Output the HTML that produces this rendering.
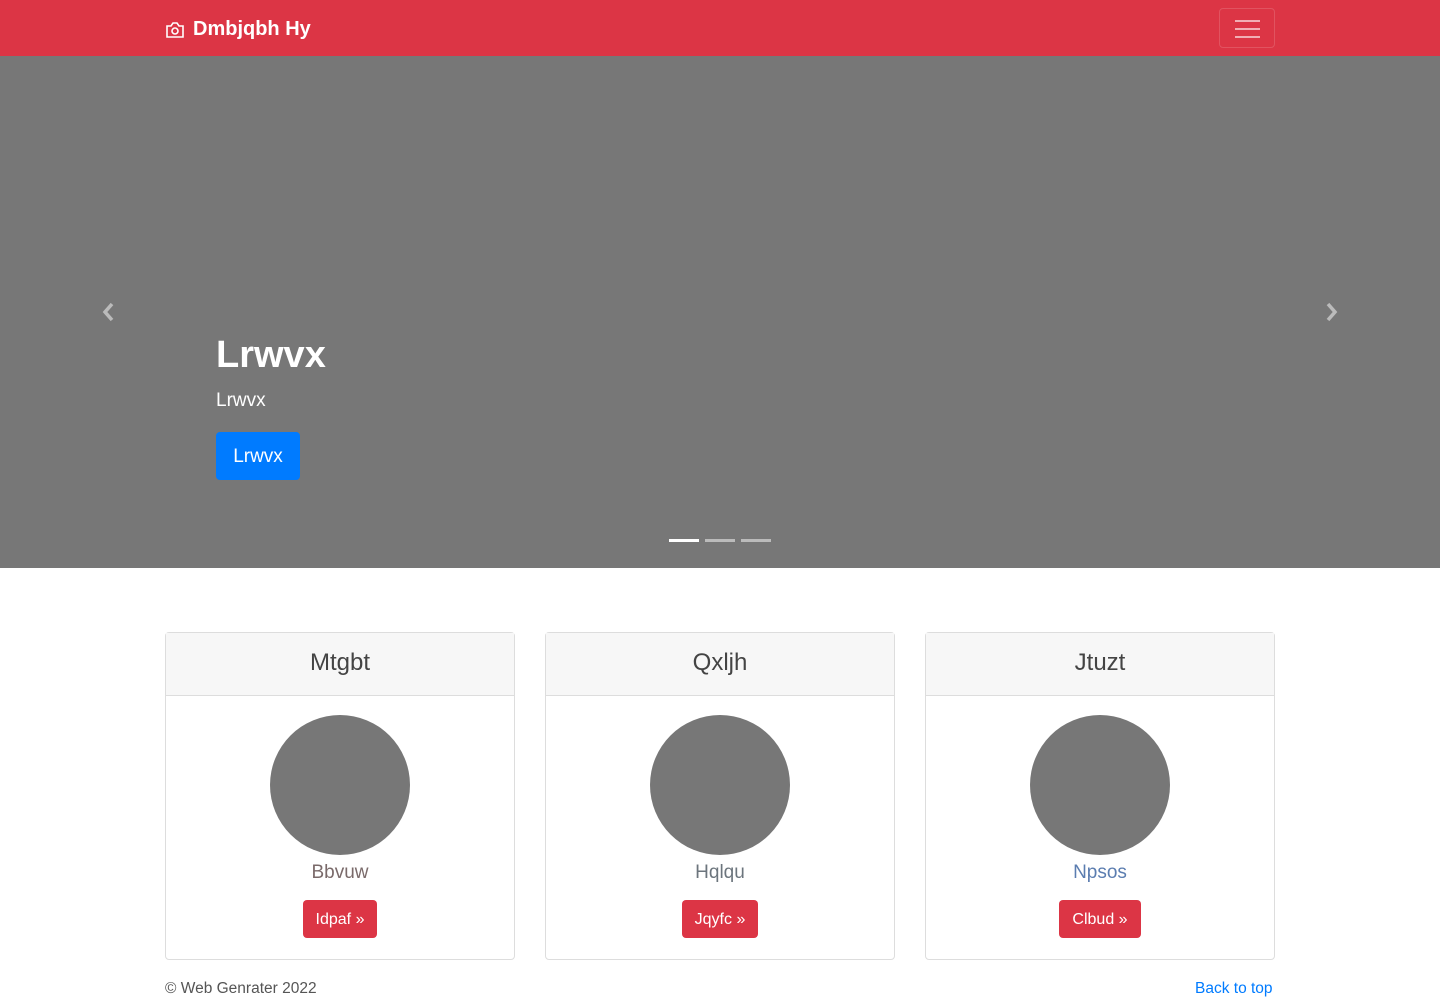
<!DOCTYPE html>
<html><head><meta charset="utf-8"><style>
*{box-sizing:border-box;margin:0;padding:0}
body{width:1440px;height:1000px;overflow:hidden;font-family:"Liberation Sans",sans-serif;background:#fff;color:#212529}
.nav{height:56px;background:#dc3545;position:relative}
.brand{position:absolute;left:165px;top:18px;color:#fff;font-weight:bold;font-size:20px;display:flex;align-items:center;gap:8px}
.tog{position:absolute;left:1219px;top:8px;width:56px;height:40px;border:1px solid rgba(255,255,255,.15);border-radius:4px}
.tog i{position:absolute;left:15px;width:25px;height:2px;background:rgba(255,255,255,.6)}
.hero{height:512px;background:#777;position:relative;color:#fff}
.hero h1{position:absolute;left:216px;font-size:38px;font-weight:bold}
.hero p{position:absolute;left:216px;font-size:19px}
.hbtn{position:absolute;left:216px;width:84px;height:48px;background:#007bff;border-radius:4px;font-size:19px;line-height:50px;text-align:center}
.ind{position:absolute;height:3px;width:30px;background:rgba(255,255,255,.5)}
.card{position:absolute;top:632px;width:350px;height:328px;border:1px solid #ddd;border-radius:4px;text-align:center}
.ch{height:63px;background:#f7f7f7;border-bottom:1px solid #ddd;font-size:24px;line-height:60px;color:#444}
.circ{width:140px;height:140px;border-radius:50%;background:#777;margin:19px auto 0}
.sub{font-size:19px;margin-top:7px;font-weight:300}
.btn{display:inline-block;margin-top:16px;background:#dc3545;color:#fff;border-radius:4px;height:38px;line-height:40px;padding:0 13px;font-size:16px}
.foot{position:absolute;top:980px;font-size:15.5px;color:#555}
</style></head><body>
<div class="nav"><div class="brand"><svg width="20" height="18" viewBox="0 0 20 18" fill="none" stroke="#fff" stroke-width="1.6"><path d="M2 5h4l2-3h4l2 3h4v11H2z"/><circle cx="10" cy="10" r="3"/></svg>Dmbjqbh Hy</div>
<div class="tog"><i style="top:11px"></i><i style="top:19px"></i><i style="top:27px"></i></div></div>
<div class="hero">
<svg style="position:absolute;left:100px;top:245px" width="16" height="22" viewBox="0 0 16 22"><path d="M12 3L5 11l7 8" stroke="#bbb" stroke-width="3.5" fill="none"/></svg>
<svg style="position:absolute;left:1324px;top:245px" width="16" height="22" viewBox="0 0 16 22"><path d="M4 3l7 8-7 8" stroke="#bbb" stroke-width="3.5" fill="none"/></svg>
<h1 style="top:278px">Lrwvx</h1><p style="top:334px">Lrwvx</p><div class="hbtn" style="top:376px">Lrwvx</div>
<div class="ind" style="left:669px;top:483px;background:#fff"></div><div class="ind" style="left:705px;top:483px"></div><div class="ind" style="left:741px;top:483px"></div>
</div>
<div class="card" style="left:165px"><div class="ch">Mtgbt</div><div class="circ"></div><div class="sub" style="color:#7a6a6a">Bbvuw</div><div class="btn">Idpaf »</div></div>
<div class="card" style="left:545px"><div class="ch">Qxljh</div><div class="circ"></div><div class="sub" style="color:#6c757d">Hqlqu</div><div class="btn">Jqyfc »</div></div>
<div class="card" style="left:925px"><div class="ch">Jtuzt</div><div class="circ"></div><div class="sub" style="color:#5b7db0">Npsos</div><div class="btn">Clbud »</div></div>
<div class="foot" style="left:165px">© Web Genrater 2022</div>
<div class="foot" style="left:1195px;color:#007bff">Back to top</div>
</body></html>
